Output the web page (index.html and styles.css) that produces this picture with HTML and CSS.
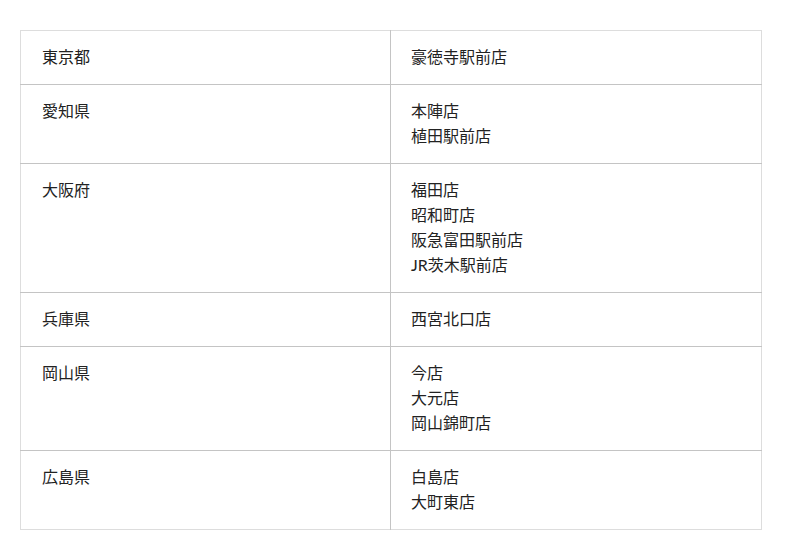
FILE: index.html
```html
<!DOCTYPE html>
<html lang="ja">
<head>
<meta charset="utf-8">
<link rel="stylesheet" href="styles.css">
</head>
<body>
<div class="page">
<table class="stores">
  <tbody>
    <tr><td class="pref">東京都</td><td class="shops">豪徳寺駅前店</td></tr>
    <tr><td class="pref">愛知県</td><td class="shops">本陣店<br>植田駅前店</td></tr>
    <tr><td class="pref">大阪府</td><td class="shops">福田店<br>昭和町店<br>阪急富田駅前店<br>JR茨木駅前店</td></tr>
    <tr><td class="pref">兵庫県</td><td class="shops">西宮北口店</td></tr>
    <tr><td class="pref">岡山県</td><td class="shops">今店<br>大元店<br>岡山錦町店</td></tr>
    <tr><td class="pref">広島県</td><td class="shops">白島店<br>大町東店</td></tr>
  </tbody>
</table>
</div>
</body>
</html>
```
FILE: styles.css
```css
html, body {
  margin: 0;
  padding: 0;
  background: #ffffff;
}
.page {
  padding: 30px 20px;
}
.stores {
  width: 742px;
  border-collapse: collapse;
  border: 1px solid #dddddd;
  font-family: Lato, "Noto Sans CJK JP", sans-serif;
  font-size: 16px;
  line-height: 25px;
  color: #222222;
  table-layout: fixed;
}
.stores td {
  padding: 13px 20px 15px 20px;
  vertical-align: top;
  text-align: left;
}
.stores td.pref {
  width: 328px;
  padding-left: 21px;
}
.stores tr + tr td {
  border-top: 1px solid #c4c4c4;
}
.stores td + td {
  border-left: 1px solid #c4c4c4;
}
```
